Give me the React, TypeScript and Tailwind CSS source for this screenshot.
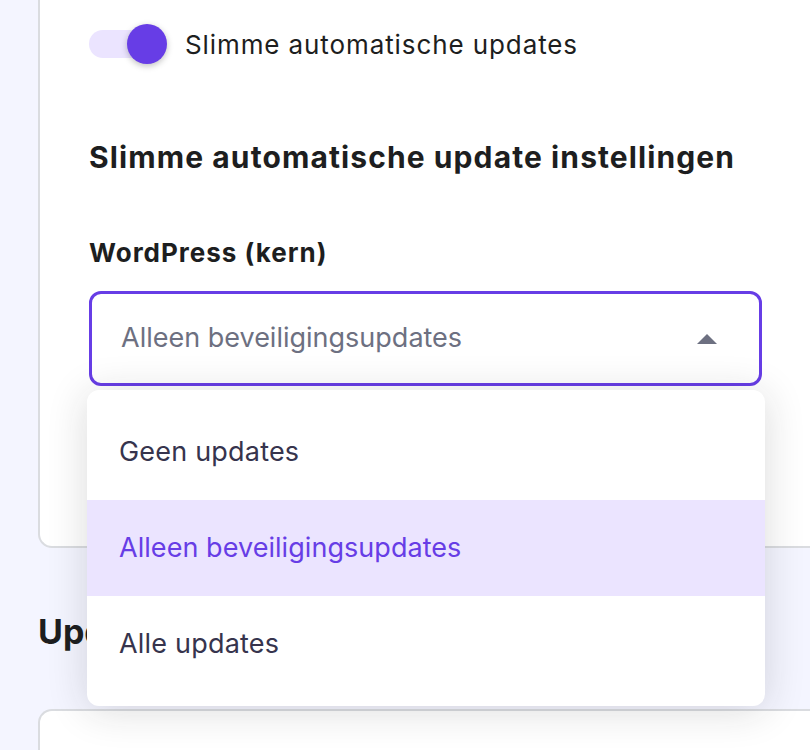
import React from 'react';

const options = ['Geen updates', 'Alleen beveiligingsupdates', 'Alle updates'];

const App: React.FC = () => {
  const selected = 'Alleen beveiligingsupdates';

  return (
    <div
      className="relative h-[750px] w-[810px] overflow-hidden bg-[#f4f5ff]"
      style={{ fontFamily: 'Inter, "Liberation Sans", sans-serif' }}
    >
      <div className="ml-[38px] w-[820px] rounded-bl-[14px] border-b-2 border-l-2 border-[#dadce0] bg-white pb-[160px] pl-[49px]">
        <div className="flex items-center gap-[18px] pt-[22px]">
          <div className="relative h-[44px] w-[78px]">
            <div className="absolute left-0 top-[8px] h-[28px] w-[60px] rounded-full bg-[#ebe4ff]" />
            <div className="absolute right-0 top-[2px] h-[40px] w-[40px] rounded-full bg-[#673de6] shadow-[0_2px_6px_rgba(0,0,0,0.25)]" />
          </div>
          <span className="text-[26px] tracking-[0.9px] text-[#1d1e20]">Slimme automatische updates</span>
        </div>

        <h3 className="mt-[74px] text-[30px] font-bold leading-[34px] tracking-[1.1px] text-[#1d1e20]">
          Slimme automatische update instellingen
        </h3>

        <label className="mt-[64px] block text-[26px] font-bold leading-[30px] tracking-[1px] text-[#1d1e20]">
          WordPress (kern)
        </label>

        <div className="mt-[23px] flex h-[95px] w-[673px] items-center justify-between rounded-[12px] border-[3px] border-[#673de6] bg-white pl-[29px] pr-[42px]">
          <span className="text-[27px] text-[#6d7081]">{selected}</span>
          <svg width="20" height="10" viewBox="0 0 20 10">
            <path d="M10 0 L20 10 L0 10 Z" fill="#6d7081" />
          </svg>
        </div>
      </div>

      <h2 className="ml-[38px] mt-[64px] text-[34px] font-bold leading-[40px] text-[#1d1e20]">
        Updates
      </h2>

      <div className="ml-[38px] mt-[57px] h-[200px] w-[820px] rounded-tl-[14px] border-l-2 border-t-2 border-[#dadce0] bg-white" />

      <ul className="absolute left-[87px] top-[390px] w-[678px] overflow-hidden rounded-[12px] bg-white py-[14px] shadow-[0_4px_40px_rgba(29,30,32,0.16)]">
        {options.map((opt) => (
          <li
            key={opt}
            className={
              opt === selected
                ? 'flex h-[96px] items-center bg-[#ebe4ff] pl-[32px] text-[27px] tracking-[0.05px] text-[#673de6]'
                : 'flex h-[96px] items-center pl-[32px] text-[27px] tracking-[0.2px] text-[#36344d]'
            }
          >
            {opt}
          </li>
        ))}
      </ul>
    </div>
  );
};

export default App;
